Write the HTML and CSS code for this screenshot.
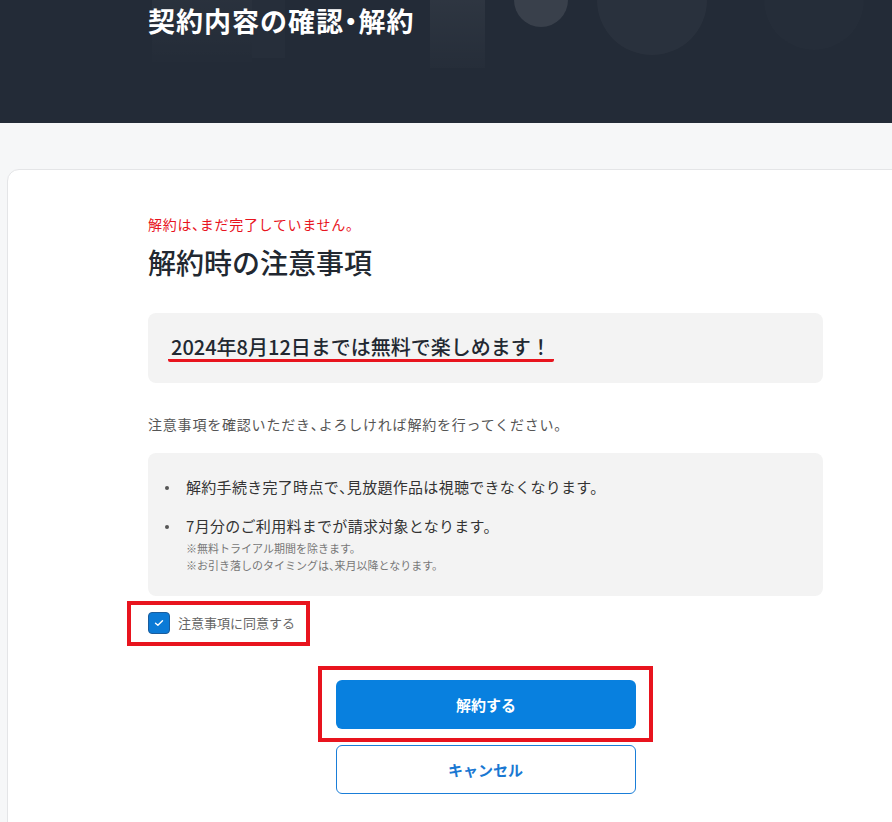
FILE: index.html
```html
<!DOCTYPE html>
<html lang="ja">
<head>
<meta charset="utf-8">
<title>契約内容の確認・解約</title>
<link rel="stylesheet" href="styles.css">
</head>
<body>
<header class="hero">
  <div class="deco">
    <span class="d d1"></span>
    <span class="d d2"></span>
    <span class="d d3"></span>
    <span class="d d4"></span>
    <span class="d d5"></span>
    <span class="d d6"></span>
  </div>
  <h1 class="hero-title">契約内容の確認<span class="narrow">・</span>解約</h1>
</header>
<main class="main">
  <section class="card">
    <p class="warn">解約は<span class="narrow">、</span>まだ完了していません。</p>
    <h2 class="heading">解約時の注意事項</h2>
    <div class="free-box">
      <span class="free-text">2024年8月12日までは無料で楽しめます！</span>
    </div>
    <p class="desc">注意事項を確認いただき<span class="narrow">、</span>よろしければ解約を行ってください。</p>
    <div class="notes-box">
      <ul class="notes">
        <li>解約手続き完了時点で<span class="narrow">、</span>見放題作品は視聴できなくなります。</li>
        <li>7月分のご利用料までが請求対象となります。
          <p class="sub">※無料トライアル期間を除きます。</p>
          <p class="sub">※お引き落しのタイミングは<span class="narrow">、</span>来月以降となります。</p>
        </li>
      </ul>
    </div>
    <div class="agree-frame">
      <label class="agree">
        <span class="check"><svg width="10" height="8" viewBox="0 0 10 8"><path d="M1.5 4.2 L3.9 6.3 L8.5 1.7" fill="none" stroke="#fff" stroke-width="1.4" stroke-linecap="round" stroke-linejoin="round"/></svg></span>
        <span class="agree-text">注意事項に同意する</span>
      </label>
    </div>
    <div class="actions">
      <div class="btn-frame">
        <button class="btn btn-primary">解約する</button>
      </div>
      <button class="btn btn-outline">キャンセル</button>
    </div>
  </section>
</main>
</body>
</html>
```
FILE: styles.css
```css
* { box-sizing: border-box; }
html, body { margin: 0; padding: 0; }
body {
  font-family: "Noto Sans CJK JP", "Noto Sans", sans-serif;
  background: #f6f7f8;
  overflow: hidden;
  width: 892px;
}
.narrow { font-feature-settings: "palt"; }
.hero {
  position: relative;
  height: 123px;
  background: #232b37;
  overflow: hidden;
}
.deco { position: absolute; inset: 0; }
.d { position: absolute; display: block; }
.d1 { left: 152px; top: 0; width: 100px; height: 62px; background: linear-gradient(rgba(255,255,255,0.03), rgba(255,255,255,0.005)); }
.d2 { left: 252px; top: 0; width: 33px; height: 58px; background: rgba(255,255,255,0.015); }
.d3 { left: 430px; top: 0; width: 55px; height: 68px; background: linear-gradient(rgba(255,255,255,0.05), rgba(255,255,255,0.01)); }
.d4 { left: 514px; top: -27px; width: 54px; height: 54px; border-radius: 50%; background: rgba(255,255,255,0.1); }
.d5 { left: 597px; top: -55px; width: 110px; height: 110px; border-radius: 50%; background: rgba(255,255,255,0.03); }
.d6 { left: 764px; top: -50px; width: 100px; height: 100px; border-radius: 50%; background: rgba(255,255,255,0.01); }
.hero-title {
  position: relative;
  margin: 0;
  padding: 1px 0 0 148px;
  color: #fff;
  font-size: 27px;
  font-weight: 700;
  line-height: 40px;
  letter-spacing: 1px;
}
.main {
  padding: 46px 0 0 7px;
}
.card {
  width: 1000px;
  min-height: 700px;
  background: #fff;
  border: 1px solid #e4e5e7;
  border-radius: 12px;
  padding: 44px 0 0 140px;
}
.card > * { width: 675px; }
.warn {
  margin: 0;
  color: #e8141e;
  font-size: 14px;
  line-height: 21px;
  letter-spacing: 0.7px;
}
.heading {
  margin: 6px 0 0;
  font-size: 28px;
  font-weight: 500;
  line-height: 42px;
  color: #222831;
}
.free-box {
  margin-top: 30px;
  height: 70px;
  background: #f3f3f3;
  border-radius: 8px;
  display: flex;
  align-items: center;
  padding-left: 20px;
}
.free-text {
  display: inline-block;
  padding: 0 3px;
  font-size: 20px;
  line-height: 25px;
  font-weight: 500;
  color: #222831;
  border-bottom: 3px solid #e8141e;
  border-radius: 2px;
}
.desc {
  margin: 31px 0 0;
  font-size: 14px;
  line-height: 21px;
  color: #555;
  letter-spacing: 0.8px;
}
.notes-box {
  margin-top: 18px;
  background: #f3f3f3;
  border-radius: 8px;
  padding: 22px 17px 22px;
}
.notes {
  list-style: none;
  margin: 0;
  padding: 0;
}
.notes li {
  position: relative;
  padding-left: 21px;
  font-size: 15px;
  line-height: 24px;
  color: #333;
  letter-spacing: 0.3px;
}
.notes li + li { margin-top: 15px; }
.notes li::before {
  content: "";
  position: absolute;
  left: 0;
  top: 11px;
  width: 4px;
  height: 4px;
  border-radius: 50%;
  background: #555;
}
.sub {
  margin: 0;
  font-size: 11px;
  line-height: 17px;
  color: #777;
  letter-spacing: 0;
}
.notes li .sub:first-of-type { margin-top: 2px; }
.agree-frame {
  width: auto;
  display: inline-flex;
  margin: 5px 0 0 -21px;
  border: 4px solid #e8141e;
  padding: 7px 11px 8px 17px;
}
.agree {
  display: flex;
  align-items: center;
  gap: 8px;
}
.check {
  width: 22px;
  height: 22px;
  border-radius: 4px;
  background: #0b7ad6;
  border: 1px solid #1a5c9c;
  display: flex;
  align-items: center;
  justify-content: center;
}
.agree-text {
  font-size: 13px;
  line-height: 20px;
  color: #666;
}
.actions {
  display: flex;
  flex-direction: column;
  align-items: center;
  margin-top: 20px;
}
.btn-frame {
  border: 4px solid #e8141e;
  padding: 10px 13px 9px 14px;
}
.btn {
  display: flex;
  align-items: center;
  justify-content: center;
  width: 300px;
  height: 49px;
  border-radius: 6px;
  font-family: inherit;
  font-size: 15px;
  font-weight: 700;
  cursor: pointer;
}
.btn-primary {
  background: #0880df;
  color: #fff;
  border: none;
}
.btn-outline {
  margin-top: 3px;
  background: #fff;
  color: #1a78d2;
  border: 1px solid #1a7ed8;
}
```
